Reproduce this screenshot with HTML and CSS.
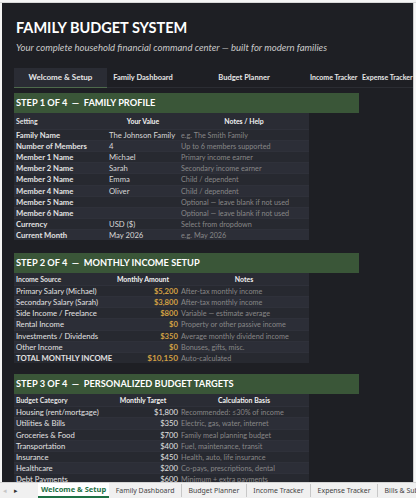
FILE: index.html
```html
<!DOCTYPE html>
<html>
<head>
<meta charset="utf-8">
<link rel="stylesheet" href="styles.css">
</head>
<body>
<div class="frame">
  <div class="colhead"></div>
  <div class="mid">
    <div class="rowhead"></div>
    <div class="sheet">
      <div class="title">FAMILY BUDGET SYSTEM</div>
      <div class="subtitle">Your complete household financial command center — built for modern families</div>
      <div class="navtabs">
        <div class="navtab active">Welcome &amp; Setup</div>
        <div class="navtab">Family Dashboard</div>
        <div class="navtab">Budget Planner</div>
        <div class="navtab tight1">Income Tracker</div>
        <div class="navtab tight2">Expense Tracker</div>
      </div>

      <div class="step step1">STEP 1 OF 4 &nbsp;—&nbsp; FAMILY PROFILE</div>
      <div class="table">
        <div class="hrow tall"><div class="c l">Setting</div><div class="c ctr">Your Value</div><div class="c ctr">Notes / Help</div></div>
        <div class="row"><div class="c l b">Family Name</div><div class="c v">The Johnson Family</div><div class="c n">e.g. The Smith Family</div></div>
        <div class="row"><div class="c l b">Number of Members</div><div class="c v">4</div><div class="c n">Up to 6 members supported</div></div>
        <div class="row"><div class="c l b">Member 1 Name</div><div class="c v">Michael</div><div class="c n">Primary income earner</div></div>
        <div class="row"><div class="c l b">Member 2 Name</div><div class="c v">Sarah</div><div class="c n">Secondary income earner</div></div>
        <div class="row"><div class="c l b">Member 3 Name</div><div class="c v">Emma</div><div class="c n">Child / dependent</div></div>
        <div class="row"><div class="c l b">Member 4 Name</div><div class="c v">Oliver</div><div class="c n">Child / dependent</div></div>
        <div class="row"><div class="c l b">Member 5 Name</div><div class="c v"></div><div class="c n">Optional — leave blank if not used</div></div>
        <div class="row"><div class="c l b">Member 6 Name</div><div class="c v"></div><div class="c n">Optional — leave blank if not used</div></div>
        <div class="row"><div class="c l b">Currency</div><div class="c v">USD ($)</div><div class="c n">Select from dropdown</div></div>
        <div class="row"><div class="c l b">Current Month</div><div class="c v">May 2026</div><div class="c n">e.g. May 2026</div></div>
      </div>

      <div class="step step2">STEP 2 OF 4 &nbsp;—&nbsp; MONTHLY INCOME SETUP</div>
      <div class="table">
        <div class="hrow"><div class="c l">Income Source</div><div class="c ctr">Monthly Amount</div><div class="c ctr">Notes</div></div>
        <div class="row"><div class="c l">Primary Salary (Michael)</div><div class="c amt">$5,200</div><div class="c n">After-tax monthly income</div></div>
        <div class="row"><div class="c l">Secondary Salary (Sarah)</div><div class="c amt">$3,800</div><div class="c n">After-tax monthly income</div></div>
        <div class="row"><div class="c l">Side Income / Freelance</div><div class="c amt">$800</div><div class="c n">Variable — estimate average</div></div>
        <div class="row"><div class="c l">Rental Income</div><div class="c amt">$0</div><div class="c n">Property or other passive income</div></div>
        <div class="row"><div class="c l">Investments / Dividends</div><div class="c amt">$350</div><div class="c n">Average monthly dividend income</div></div>
        <div class="row"><div class="c l">Other Income</div><div class="c amt">$0</div><div class="c n">Bonuses, gifts, misc.</div></div>
        <div class="row total"><div class="c l b">TOTAL MONTHLY INCOME</div><div class="c amt big">$10,150</div><div class="c n">Auto-calculated</div></div>
      </div>

      <div class="step step3">STEP 3 OF 4 &nbsp;—&nbsp; PERSONALIZED BUDGET TARGETS</div>
      <div class="table">
        <div class="hrow"><div class="c l">Budget Category</div><div class="c ctr">Monthly Target</div><div class="c ctr">Calculation Basis</div></div>
        <div class="row"><div class="c l">Housing (rent/mortgage)</div><div class="c tgt">$1,800</div><div class="c n">Recommended: ≤30% of income</div></div>
        <div class="row"><div class="c l">Utilities &amp; Bills</div><div class="c tgt">$350</div><div class="c n">Electric, gas, water, internet</div></div>
        <div class="row"><div class="c l">Groceries &amp; Food</div><div class="c tgt">$700</div><div class="c n">Family meal planning budget</div></div>
        <div class="row"><div class="c l">Transportation</div><div class="c tgt">$400</div><div class="c n">Fuel, maintenance, transit</div></div>
        <div class="row"><div class="c l">Insurance</div><div class="c tgt">$450</div><div class="c n">Health, auto, life insurance</div></div>
        <div class="row"><div class="c l">Healthcare</div><div class="c tgt">$200</div><div class="c n">Co-pays, prescriptions, dental</div></div>
        <div class="row"><div class="c l">Debt Payments</div><div class="c tgt">$600</div><div class="c n">Minimum + extra payments</div></div>
      </div>
    </div>
    <div class="vscroll"></div>
  </div>
  <div class="tabbar">
    <div class="navarrows"><span class="arr dim">◂</span><span class="arr">▸</span></div>
    <div class="stab active">Welcome &amp; Setup</div>
    <div class="stab">Family Dashboard</div>
    <div class="stab">Budget Planner</div>
    <div class="stab">Income Tracker</div>
    <div class="stab">Expense Tracker</div>
    <div class="stab">Bills &amp; Subscriptions</div>
  </div>
</div>
</body>
</html>
```

FILE: styles.css
```css
* { box-sizing: border-box; }
html, body { margin: 0; padding: 0; }
body {
  background: #ffffff;
  font-family: Lato, "Open Sans", sans-serif;
  width: 416px;
  height: 498px;
  overflow: hidden;
}
.frame {
  display: flex;
  flex-direction: column;
  width: 416px;
  height: 498px;
}
.colhead {
  height: 3px;
  flex: none;
  background: #f4f4f4;
  border-bottom: 1px solid #d8d8d8;
}
.mid {
  display: flex;
  height: 479px;
  flex: none;
}
.rowhead {
  width: 2px;
  background: #f4f4f4;
  flex: none;
}
.sheet {
  width: 411px;
  flex: none;
  background: #1e1f24;
  overflow: hidden;
  padding-left: 12px;
  padding-top: 15px;
}
.vscroll {
  width: 3px;
  flex: none;
  background: #f6f6f6;
  border-left: 1px solid #d0d0d0;
}
.title {
  color: #ffffff;
  font-weight: 700;
  font-size: 14.5px;
  line-height: 20px;
  height: 20px;
  padding-left: 2px;
  white-space: nowrap;
}
.subtitle {
  margin-top: 3px;
  color: #c9c9c9;
  font-style: italic;
  font-size: 9.55px;
  line-height: 14px;
  height: 14px;
  padding-left: 2px;
  white-space: nowrap;
}
.navtabs {
  margin-top: 12.5px;
  display: grid;
  grid-template-columns: 93px 72px 130px 50px 54px;
  height: 20px;
  border-bottom: 1px solid #2b2d33;
}
.navtab {
  color: #e6e6e6;
  font-weight: 700;
  font-size: 7.5px;
  line-height: 19px;
  text-align: center;
  white-space: nowrap;
  display: flex;
  justify-content: center;
}
.navtab.tight1 {
  justify-content: flex-start;
  padding-left: 1px;
  font-size: 7px;
}
.navtab.tight2 {
  justify-content: flex-start;
  padding-left: 3px;
  font-size: 7px;
}
.navtab.active {
  background: #2a2c34;
  border-bottom: 1px solid #4e6a4c;
  font-size: 8px;
}
.step {
  width: 345px;
  height: 20px;
  background: #3a5638;
  color: #ffffff;
  font-weight: 700;
  font-size: 9.25px;
  line-height: 20px;
  padding-left: 2px;
  white-space: nowrap;
}
.step1 { margin-top: 5px; }
.step2 { margin-top: 12.5px; }
.step3 { margin-top: 11px; }
.table {
  width: 295px;
  display: flex;
  flex-direction: column;
}
.hrow, .row {
  display: grid;
  grid-template-columns: 93px 72px 130px;
  white-space: nowrap;
}
.hrow {
  height: 12.5px;
  background: #2a2c34;
  color: #f2f2f2;
  font-weight: 700;
  font-size: 6.9px;
  line-height: 12.5px;
}
.hrow.tall {
  height: 16.5px;
  line-height: 16.5px;
}
.row {
  height: 11.12px;
  line-height: 11px;
  font-size: 7.7px;
  background: #272930;
  border-top: 1px solid #2f313a;
}
.row:nth-child(odd) { background: #2c2e37; }
.c { overflow: visible; }
.n { overflow: hidden; }
.l { padding-left: 2px; color: #e2e2e2; }
.b { font-weight: 700; }
.ctr { text-align: center; }
.v { padding-left: 2px; color: #d8d8d8; }
.n { padding-left: 2px; color: #878787; font-size: 7.25px; }
.amt { text-align: right; padding-right: 1px; color: #cf9e43; font-weight: 700; }
.tgt { text-align: right; padding-right: 1px; color: #e0e0e0; }
.big { font-size: 8.3px; }
.tabbar {
  height: 16px;
  flex: none;
  background: #f0f0f0;
  border-top: 1px solid #d4d4d4;
  display: flex;
  align-items: stretch;
  font-family: "Noto Sans", "Open Sans", sans-serif;
  font-size: 6.95px;
  color: #444;
  white-space: nowrap;
  overflow: hidden;
}
.navarrows {
  width: 38px;
  flex: none;
  display: flex;
  align-items: center;
  gap: 7px;
  padding-left: 3px;
  font-size: 7px;
  color: #333;
}
.arr.dim { color: #c5c5c5; }
.stab {
  padding: 0 6.5px;
  line-height: 14px;
  border-right: 1px solid #c8c8c8;
  margin: 1px 0;
}
.stab.active {
  background: #ffffff;
  color: #1e7145;
  font-weight: 700;
  font-size: 7.5px;
  padding: 0 3px 0 3px;
  border-bottom: 2px solid #1e7145;
  margin: -1px 0 0 0;
  line-height: 15px;
  border-right: none;
}
```
